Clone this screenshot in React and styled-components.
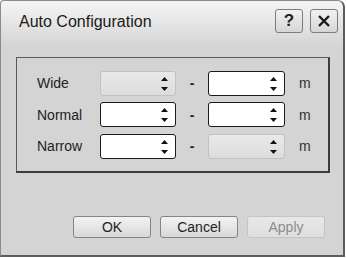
import React from 'react';
import styled, { createGlobalStyle } from 'styled-components';

const GlobalStyle = createGlobalStyle`
    body {
        margin: 0;
        background: #ffffff;
        font-family: "Liberation Sans", Arial, sans-serif;
    }
`;

const Dialog = styled.div`
    width: 345px;
    height: 257px;
    box-sizing: border-box;
    border: 1px solid #8a8a8a;
    border-right: 2px solid #5c5c5c;
    border-bottom: 2px solid #5c5c5c;
    border-radius: 4px 7px 0 0;
    background: linear-gradient(#f5f5f5 0, #d4d4d4 46px, #d4d4d4 100%);
    display: flex;
    flex-direction: column;
    color: #1e1e1e;
`;

const TitleBar = styled.div`
    display: flex;
    align-items: center;
    height: 24px;
    margin-top: 8px;
    padding: 0 5px 0 18px;
`;

const Title = styled.div`
    flex: 1;
    padding-top: 2px;
    font-size: 16px;
    color: #1a1a1a;
`;

const TitleButtons = styled.div`
    display: flex;
    gap: 7px;
`;

const TitleButton = styled.button`
    width: 28px;
    height: 24px;
    box-sizing: border-box;
    border: 1px solid #7c7c7c;
    border-radius: 3px;
    background: linear-gradient(#f2f2f2, #d6d6d6);
    display: flex;
    align-items: center;
    justify-content: center;
    padding: 0;
    font-family: "Liberation Sans", Arial, sans-serif;
    font-size: 17px;
    font-weight: bold;
    color: #222;
`;

const GroupBox = styled.div`
    margin: 24px 0 0 15px;
    width: 314px;
    height: 116px;
    box-sizing: border-box;
    border: 1px solid #5a5a5a;
    border-right: 2px solid #3c3c3c;
    border-bottom: 2px solid #3c3c3c;
    padding: 12px 0 0 20px;
`;

const Grid = styled.div`
    display: grid;
    grid-template-columns: 63px 76px 32px 77px auto;
    grid-auto-rows: 26px;
    row-gap: 5.5px;
    align-items: center;
`;

const Label = styled.div`
    font-size: 14px;
    color: #222;
`;

const Dash = styled.div`
    text-align: center;
    font-size: 14px;
    font-weight: bold;
    color: #222;
`;

const Unit = styled.div`
    padding-left: 14px;
    font-size: 14px;
    color: #333;
`;

const SpinBox = styled.div`
    position: relative;
    height: 25px;
    box-sizing: border-box;
    border: 1px solid ${p => (p.$disabled ? '#c2c2c2' : '#1a1a1a')};
    border-radius: 3px;
    background: ${p => (p.$disabled ? 'linear-gradient(#e9e9e9, #dcdcdc)' : '#ffffff')};
`;

const Arrows = styled.svg`
    position: absolute;
    right: 6px;
    top: 4px;
`;

const Spin = ({ disabled }) => (
    <SpinBox $disabled={disabled}>
        <Arrows width="9" height="16" viewBox="0 0 9 16">
            <path d="M1 5 L4.5 1 L8 5 Z" fill="#111" />
            <path d="M1 11 L4.5 15 L8 11 Z" fill="#111" />
        </Arrows>
    </SpinBox>
);

const ButtonRow = styled.div`
    display: flex;
    justify-content: flex-end;
    gap: 9px;
    margin-top: 43px;
    padding-right: 18px;
`;

const Button = styled.button`
    width: 78px;
    height: 22px;
    box-sizing: border-box;
    border: 1px solid ${p => (p.disabled ? '#c4c4c4' : '#858585')};
    border-radius: 3px;
    background: ${p => (p.disabled ? 'linear-gradient(#e8e8e8, #dedede)' : 'linear-gradient(#f3f3f3, #d8d8d8)')};
    font-family: "Liberation Sans", Arial, sans-serif;
    font-size: 14px;
    color: ${p => (p.disabled ? '#8c8c8c' : '#1e1e1e')};
    padding: 0;
`;

const rows = [
    { label: 'Wide', left: true, right: false },
    { label: 'Normal', left: false, right: false },
    { label: 'Narrow', left: false, right: true },
];

export default function App() {
    return (
        <>
            <GlobalStyle />
            <Dialog>
                <TitleBar>
                    <Title>Auto Configuration</Title>
                    <TitleButtons>
                        <TitleButton>?</TitleButton>
                        <TitleButton>
                            <svg width="14" height="14" viewBox="0 0 14 14">
                                <path d="M2 2 L12 12 M12 2 L2 12" stroke="#1a1a1a" strokeWidth="2.4" />
                            </svg>
                        </TitleButton>
                    </TitleButtons>
                </TitleBar>
                <GroupBox>
                    <Grid>
                        {rows.map(r => (
                            <React.Fragment key={r.label}>
                                <Label>{r.label}</Label>
                                <Spin disabled={r.left} />
                                <Dash>-</Dash>
                                <Spin disabled={r.right} />
                                <Unit>m</Unit>
                            </React.Fragment>
                        ))}
                    </Grid>
                </GroupBox>
                <ButtonRow>
                    <Button>OK</Button>
                    <Button>Cancel</Button>
                    <Button disabled>Apply</Button>
                </ButtonRow>
            </Dialog>
        </>
    );
}
